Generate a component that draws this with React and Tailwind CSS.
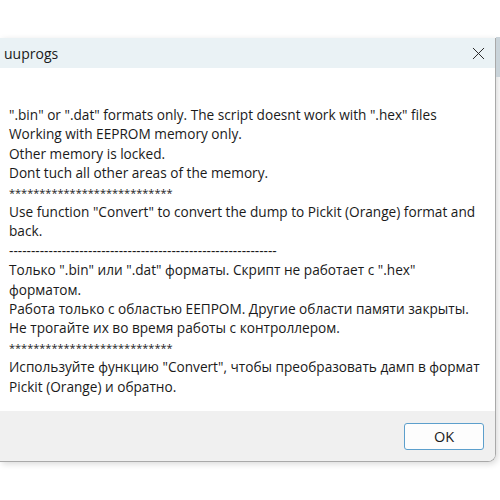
import { X } from 'lucide-react';

const lines = [
  '".bin" or ".dat" formats only. The script doesnt work with ".hex" files',
  'Working with EEPROM memory only.',
  'Other memory is locked.',
  'Dont tuch all other areas of the memory.',
  '*',
  'Use function "Convert" to convert the dump to Pickit (Orange) format and',
  'back.',
  '-------------------------------------------------------------',
  'Только ".bin" или ".dat" форматы. Скрипт не работает с ".hex"',
  'форматом.',
  'Работа только с областью ЕЕПРОМ. Другие области памяти закрыты.',
  'Не трогайте их во время работы с контроллером.',
  '*',
  'Используйте функцию "Convert", чтобы преобразовать дамп в формат',
  'Pickit (Orange) и обратно.',
];

const stars = '***************************';

function App() {
  return (
    <div className="h-[500px] w-[500px] overflow-hidden bg-white pt-[38px]">
      <div className="flex">
        <div className="w-[496px] overflow-hidden rounded-br-[8px] border-r border-b border-[#a9a9a9] shadow-[2px_2px_6px_rgba(0,0,0,0.15)] font-['Open_Sans',sans-serif] text-[#1a1a1a]">
          <div className="flex h-[30px] items-center justify-between bg-[#eaf2f5] pl-[4px] pr-[6px]">
            <span className="text-[14px]">uuprogs</span>
            <X size={21} strokeWidth={1.1} className="text-[#222]" />
          </div>
          <div className="bg-white pl-[9px] pt-[37px] pb-[15px] text-[13.65px] leading-[19.4px]">
            {lines.map((l, i) =>
              l === '*' ? (
                <div key={i} className="h-[19.4px] whitespace-nowrap text-[11px] leading-[19.4px]">{stars}</div>
              ) : (
                <div key={i} className="whitespace-nowrap">{l}</div>
              )
            )}
          </div>
          <div className="flex h-[50px] justify-end bg-[#f0f0f0] pt-[12px] pr-[11px]">
            <button className="h-[27px] w-[80px] rounded-[3px] border border-[#5c9fcc] bg-[#fdfdfd] text-[14.5px] text-[#1a1a1a]">
              OK
            </button>
          </div>
        </div>
        <div className="mt-[-1px] h-[40px] w-[4px] bg-[#c9d3d9]" />
      </div>
    </div>
  );
}

export default App;
